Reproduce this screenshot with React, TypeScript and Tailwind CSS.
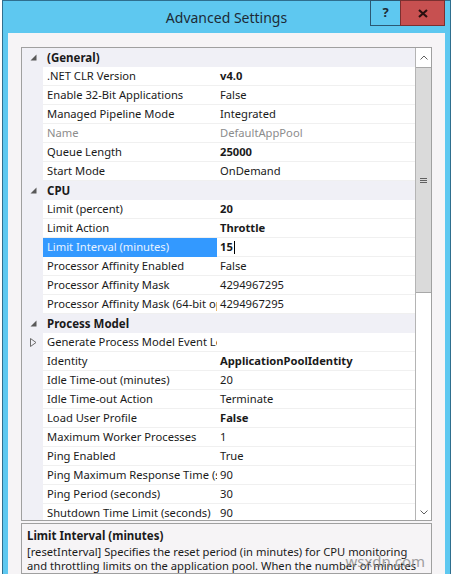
import React from "react";

type Row = {
  kind?: "cat" | "sub";
  label: string;
  value?: string;
  bold?: boolean;
  dim?: boolean;
  selected?: boolean;
};

const rows: Row[] = [
  { kind: "cat", label: "(General)" },
  { label: ".NET CLR Version", value: "v4.0", bold: true },
  { label: "Enable 32-Bit Applications", value: "False" },
  { label: "Managed Pipeline Mode", value: "Integrated" },
  { label: "Name", value: "DefaultAppPool", dim: true },
  { label: "Queue Length", value: "25000", bold: true },
  { label: "Start Mode", value: "OnDemand" },
  { kind: "cat", label: "CPU" },
  { label: "Limit (percent)", value: "20", bold: true },
  { label: "Limit Action", value: "Throttle", bold: true },
  { label: "Limit Interval (minutes)", value: "15", bold: true, selected: true },
  { label: "Processor Affinity Enabled", value: "False" },
  { label: "Processor Affinity Mask", value: "4294967295" },
  { label: "Processor Affinity Mask (64-bit option)", value: "4294967295" },
  { kind: "cat", label: "Process Model" },
  { kind: "sub", label: "Generate Process Model Event Log Entry", value: "" },
  { label: "Identity", value: "ApplicationPoolIdentity", bold: true },
  { label: "Idle Time-out (minutes)", value: "20" },
  { label: "Idle Time-out Action", value: "Terminate" },
  { label: "Load User Profile", value: "False", bold: true },
  { label: "Maximum Worker Processes", value: "1" },
  { label: "Ping Enabled", value: "True" },
  { label: "Ping Maximum Response Time (seconds)", value: "90" },
  { label: "Ping Period (seconds)", value: "30" },
  { label: "Shutdown Time Limit (seconds)", value: "90" },
];

const font = { fontFamily: '"Noto Sans", "Open Sans", sans-serif' };

function GridRow({ row }: { row: Row }) {
  if (row.kind === "cat") {
    return (
      <div className="flex h-[19px] items-center bg-[#f0f0f6]">
        <div className="flex w-[21px] shrink-0 items-center justify-center pl-[2px]">
          <svg width="7" height="7" viewBox="0 0 7 7">
            <path d="M6.5 0.5 L6.5 6.5 L0.5 6.5 Z" fill="#595959" />
          </svg>
        </div>
        <div className="pl-[4px] text-[11.5px] font-bold text-[#1a1a1a]">{row.label}</div>
      </div>
    );
  }
  return (
    <div className="flex h-[19px] items-stretch">
      <div className="flex w-[21px] shrink-0 items-center justify-center bg-[#f0f0f6] pl-[2px]">
        {row.kind === "sub" && (
          <svg width="7" height="9" viewBox="0 0 7 9">
            <path d="M0.5 0.5 L6 4.5 L0.5 8.5 Z" fill="none" stroke="#6b6b6b" />
          </svg>
        )}
      </div>
      <div
        className={`flex w-[174px] shrink-0 items-center overflow-hidden whitespace-nowrap border-b pl-[4px] text-[11.2px] ${
          row.selected
            ? "border-[#3399ff] bg-[#3399ff] text-[#e8f3ff]"
            : row.dim
            ? "border-[#f0f0f0] text-[#8c8c8c]"
            : "border-[#f0f0f0] text-[#1a1a1a]"
        }`}
      >
        {row.label}
      </div>
      <div
        className={`flex flex-1 items-center overflow-hidden whitespace-nowrap border-b border-[#f0f0f0] pl-[3px] text-[11.2px] ${
          row.bold ? "font-bold" : ""
        } ${row.dim ? "text-[#8c8c8c]" : "text-[#1a1a1a]"}`}
      >
        {row.value}
        {row.selected && <span className="ml-[1px] inline-block h-[13px] w-px bg-black" />}
      </div>
    </div>
  );
}

function ScrollBar() {
  return (
    <div className="flex w-[16px] shrink-0 flex-col border-l border-[#b4b4b4] bg-white">
      <div className="flex h-[19px] items-center justify-center">
        <svg width="8" height="5" viewBox="0 0 8 5">
          <path d="M0.5 4.5 L4 1 L7.5 4.5" fill="none" stroke="#606060" />
        </svg>
      </div>
      <div className="flex h-[226px] flex-col items-center border-y border-[#a8a8a8] bg-[#dadada] pt-[110px]">
        <div className="flex flex-col gap-[1px]">
          <div className="h-px w-[7px] bg-[#606060]" />
          <div className="h-px w-[7px] bg-[#606060]" />
          <div className="h-px w-[7px] bg-[#606060]" />
        </div>
      </div>
      <div className="flex-1" />
      <div className="flex h-[16px] items-center justify-center">
        <svg width="8" height="5" viewBox="0 0 8 5">
          <path d="M0.5 0.5 L4 4 L7.5 0.5" fill="none" stroke="#606060" />
        </svg>
      </div>
    </div>
  );
}

export default function App() {
  return (
    <div className="relative h-[574px] w-[451px] overflow-hidden bg-white pl-[2px]" style={font}>
      <div className="flex h-full flex-col border-x border-t border-[#2f6f8f] bg-[#5ec8f0]">
        {/* title bar */}
        <div className="relative flex h-[32px] shrink-0 items-center justify-center">
          <span className="text-[14px] text-[#1d2b36]">Advanced Settings</span>
          <div className="absolute right-[5px] top-[-1px] flex h-[26px]">
            <div className="flex w-[30px] items-center justify-center border border-r-0 border-[#2b5873] text-[13px] font-bold text-[#1d2b36]">
              ?
            </div>
            <div className="flex w-[45px] items-center justify-center border border-[#7a3030] bg-[#c75050]">
              <svg width="10" height="9" viewBox="0 0 10 9">
                <path d="M1 1 L9 8 M9 1 L1 8" stroke="#2a1010" strokeWidth="2.2" />
              </svg>
            </div>
          </div>
        </div>

        {/* client area */}
        <div className="mx-[5px] flex flex-1 flex-col bg-[#f6f4f6] px-[13px] pt-[14px]">
          <div className="flex h-[474px] shrink-0 border border-[#a0a0a0] bg-white">
            <div className="flex-1 overflow-hidden">
              {rows.map((r, i) => (
                <GridRow key={i} row={r} />
              ))}
            </div>
            <ScrollBar />
          </div>
          <div className="mt-[2px] flex-1 border border-[#a0a0a0] bg-[#f6f4f6] px-[5px] pt-[3px] text-[11.2px] text-[#1a1a1a]">
            <div className="text-[11.5px] font-bold leading-[18px]">Limit Interval (minutes)</div>
            <div className="leading-[14px]">
              [resetInterval] Specifies the reset period (in minutes) for CPU monitoring and throttling
              limits on the application pool. When the number of minutes
            </div>
          </div>
        </div>
      </div>
      <div className="absolute bottom-[2px] right-[26px] text-[15px] text-[#8a8a8a] opacity-80">wsxdn.com</div>
    </div>
  );
}
